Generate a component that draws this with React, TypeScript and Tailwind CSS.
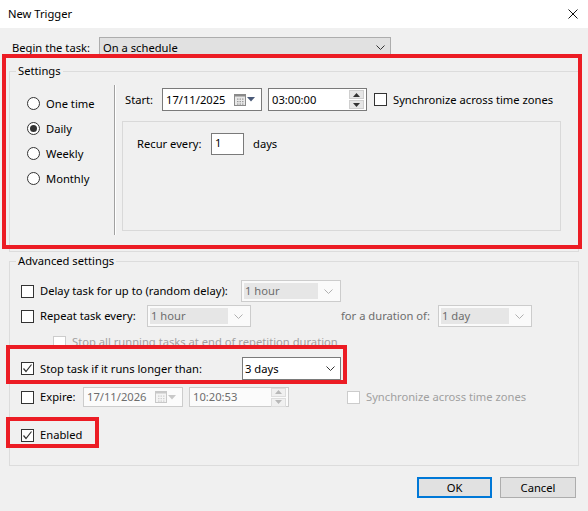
import React from 'react';

const Chevron = ({ color = '#606060' }: { color?: string }) => (
  <svg width="9" height="5" viewBox="0 0 9 5" className="shrink-0">
    <polyline points="0.5,0.5 4.5,4.5 8.5,0.5" fill="none" stroke={color} strokeWidth="1" />
  </svg>
);

const Check = () => (
  <svg width="11" height="11" viewBox="0 0 11 11">
    <polyline points="1.5,5.5 4,8.5 9.5,1.5" fill="none" stroke="#333" strokeWidth="1.2" />
  </svg>
);

const Checkbox = ({ checked = false, disabled = false }: { checked?: boolean; disabled?: boolean }) => (
  <div
    className={`flex h-[13px] w-[13px] shrink-0 items-center justify-center border bg-white ${
      disabled ? 'border-[#cccccc]' : 'border-[#333333]'
    }`}
  >
    {checked && <Check />}
  </div>
);

const Radio = ({ checked = false, label }: { checked?: boolean; label: string }) => (
  <div className="flex h-[25px] items-center gap-[6px]">
    <div className="flex h-[13px] w-[13px] items-center justify-center rounded-full border border-[#333333] bg-white">
      {checked && <div className="h-[7px] w-[7px] rounded-full bg-[#333333]" />}
    </div>
    <span>{label}</span>
  </div>
);

const Combo = ({ value, width, disabled = false }: { value: string; width: string; disabled?: boolean }) =>
  disabled ? (
    <div className={`flex h-[22px] ${width} shrink-0 items-center border border-[#cccccc] bg-[#fafafa] p-[2px]`}>
      <div className="flex h-full flex-1 items-center bg-[#e6e6e6] pl-[1px] text-[#6d6d6d]">{value}</div>
      <div className="flex w-[20px] items-center justify-center">
        <Chevron color="#b0b0b0" />
      </div>
    </div>
  ) : (
    <div className={`flex h-[23px] ${width} shrink-0 items-center border border-[#7a7a7a] bg-white pl-[2px]`}>
      <span className="flex-1">{value}</span>
      <div className="flex w-[20px] items-center justify-center">
        <Chevron color="#333" />
      </div>
    </div>
  );

const CalendarIcon = ({ disabled = false }: { disabled?: boolean }) => (
  <div className="flex items-center gap-[1px]">
    <svg width="12" height="12" viewBox="0 0 12 12">
      <rect x="0.5" y="0.5" width="11" height="11" fill={disabled ? '#f4f4f4' : '#e8e8e8'} stroke={disabled ? '#c8c8c8' : '#8a8a8a'} />
      <rect x="0.5" y="0.5" width="11" height="2" fill={disabled ? '#c8c8c8' : '#8a8a8a'} />
      {[3, 5.5, 8].map((x) =>
        [4.5, 7, 9.5].map((y) => (
          <rect key={`${x}-${y}`} x={x} y={y} width="1.5" height="1.2" fill={disabled ? '#cfcfcf' : '#9a9a9a'} />
        ))
      )}
    </svg>
    <svg width="8" height="5" viewBox="0 0 8 5">
      <polygon points="0,0 8,0 4,4.5" fill={disabled ? '#c8c8c8' : '#4a5a78'} />
    </svg>
  </div>
);

const DateBox = ({ value, disabled = false, h }: { value: string; disabled?: boolean; h: string }) => (
  <div
    className={`flex ${h} w-[100px] shrink-0 items-center border pl-[3px] pr-[6px] ${
      disabled ? 'border-[#cccccc] bg-[#fbfbfb] text-[#6d6d6d]' : 'border-[#7a7a7a] bg-white'
    }`}
  >
    <span className="flex-1">{value}</span>
    <CalendarIcon disabled={disabled} />
  </div>
);

const Spinner = ({ disabled = false }: { disabled?: boolean }) => (
  <div className="flex flex-col gap-[1px] pr-[2px]">
    {['up', 'down'].map((d) => (
      <div
        key={d}
        className={`flex h-[9px] w-[15px] items-center justify-center border ${
          disabled ? 'border-[#dddddd] bg-[#f0f0f0]' : 'border-[#cfcfcf] bg-[#e6e6e6]'
        }`}
      >
        <svg width="7" height="4" viewBox="0 0 7 4">
          <polygon
            points={d === 'up' ? '0,4 7,4 3.5,0' : '0,0 7,0 3.5,4'}
            fill={disabled ? '#b8b8b8' : '#333'}
          />
        </svg>
      </div>
    ))}
  </div>
);

const TimeBox = ({ value, disabled = false, w, h }: { value: string; disabled?: boolean; w: string; h: string }) => (
  <div
    className={`flex ${h} ${w} shrink-0 items-center border pl-[3px] ${
      disabled ? 'border-[#cccccc] bg-[#fbfbfb] text-[#6d6d6d]' : 'border-[#7a7a7a] bg-white'
    }`}
  >
    <span className="flex-1">{value}</span>
    <Spinner disabled={disabled} />
  </div>
);

const App: React.FC = () => {
  return (
    <div
      className="relative h-[511px] w-[588px] overflow-hidden whitespace-nowrap bg-[#f0f0f0] text-[11.2px] leading-[16px] text-black"
      style={{ fontFamily: '"Noto Sans", "Segoe UI", sans-serif' }}
    >
      {/* title bar */}
      <div className="flex h-[28px] items-center justify-between bg-white pl-[8px] pr-[10px]">
        <span>New Trigger</span>
        <svg width="10" height="10" viewBox="0 0 10 10">
          <path d="M0.5 0.5 L9.5 9.5 M9.5 0.5 L0.5 9.5" stroke="#111" strokeWidth="1" />
        </svg>
      </div>

      <div className="px-[9px]">
        <div className="mt-[9px] flex h-[21px] items-center">
          <span className="w-[90px] pl-[3px]">Begin the task:</span>
          <div className="flex h-[21px] w-[292px] items-center border border-[#adadad] bg-[#e1e1e1] pl-[3px]">
            <span className="flex-1">On a schedule</span>
            <div className="flex w-[20px] items-center justify-center">
              <Chevron color="#333" />
            </div>
          </div>
        </div>

        {/* Settings */}
        <fieldset className="mt-[5px] h-[189px] w-[570px] border border-[#dcdcdc]">
          <legend className="ml-[6px] px-[2px]">Settings</legend>
          <div className="mt-[6px] flex">
            <div className="flex w-[104px] flex-col pl-[17px] pt-[6px]">
              <Radio label="One time" />
              <Radio checked label="Daily" />
              <Radio label="Weekly" />
              <Radio label="Monthly" />
            </div>
            <div className="h-[150px] w-[2px] border-l border-r border-l-[#a0a0a0] border-r-white" />
            <div className="flex flex-col pl-[6px] pt-[3px]">
              <div className="flex h-[23px] items-center">
                <span className="w-[40px] shrink-0 pl-[3px]">Start:</span>
                <DateBox value="17/11/2025" h="h-[23px]" />
                <div className="w-[6px]" />
                <TimeBox value="03:00:00" w="w-[99px]" h="h-[23px]" />
                <div className="ml-[7px] flex items-center gap-[6px]">
                  <Checkbox />
                  <span>Synchronize across time zones</span>
                </div>
              </div>
              <div className="mt-[10px] h-[110px] w-[439px] border border-[#d9d9d9] pl-[14px] pt-[11px]">
                <div className="flex h-[22px] items-center">
                  <span className="w-[74px]">Recur every:</span>
                  <div className="flex h-[22px] w-[33px] items-start border border-[#7a7a7a] bg-white pl-[3px] pt-[1px]">
                    1
                  </div>
                  <span className="ml-[9px]">days</span>
                </div>
              </div>
            </div>
          </div>
        </fieldset>

        {/* Advanced settings */}
        <fieldset className="mt-[1px] h-[213px] w-[570px] border border-[#dcdcdc]">
          <legend className="ml-[6px] px-[2px]">Advanced settings</legend>
          <div className="flex flex-col pl-[11px]">
            <div className="mt-[11px] flex h-[22px] items-center">
              <Checkbox />
              <span className="ml-[6px] w-[201px] shrink-0">Delay task for up to (random delay):</span>
              <Combo value="1 hour" width="w-[100px]" disabled />
            </div>
            <div className="mt-[3px] flex h-[22px] items-center">
              <Checkbox />
              <span className="ml-[6px] w-[107px] shrink-0">Repeat task every:</span>
              <Combo value="1 hour" width="w-[104px]" disabled />
              <span className="ml-[90px] w-[97px] shrink-0 text-[#6d6d6d]">for a duration of:</span>
              <Combo value="1 day" width="w-[94px]" disabled />
            </div>
            <div className="mt-[8px] flex h-[14px] items-center pl-[32px]">
              <Checkbox disabled />
              <span className="ml-[6px] text-[#a0a0a0]">Stop all running tasks at end of repetition duration</span>
            </div>
            <div className="mt-[8px] flex h-[23px] items-center">
              <Checkbox checked />
              <span className="ml-[6px] w-[202px] shrink-0">Stop task if it runs longer than:</span>
              <Combo value="3 days" width="w-[99px]" />
            </div>
            <div className="mt-[7px] flex h-[20px] items-center">
              <Checkbox />
              <span className="ml-[6px] w-[43px] shrink-0">Expire:</span>
              <DateBox value="17/11/2026" h="h-[20px]" disabled />
              <div className="w-[6px]" />
              <TimeBox value="10:20:53" w="w-[100px]" h="h-[20px]" disabled />
              <div className="ml-[58px] flex items-center gap-[6px]">
                <Checkbox disabled />
                <span className="text-[#a0a0a0]">Synchronize across time zones</span>
              </div>
            </div>
            <div className="mt-[20px] flex h-[16px] items-center">
              <Checkbox checked />
              <span className="ml-[6px]">Enabled</span>
            </div>
          </div>
        </fieldset>

        <div className="mt-[11px] flex justify-end gap-[8px] pr-[3px]">
          <button className="h-[21px] w-[75px] border-2 border-[#0078d7] bg-[#e1e1e1]">OK</button>
          <button className="h-[21px] w-[76px] border border-[#adadad] bg-[#e1e1e1]">Cancel</button>
        </div>
      </div>

      {/* annotation boxes */}
      <div className="absolute left-[2px] top-[54px] h-[195px] w-[580px] border-4 border-[#ec1c24]" />
      <div className="absolute left-[6px] top-[345px] h-[39px] w-[341px] border-4 border-[#ec1c24]" />
      <div className="absolute left-[6px] top-[417px] h-[31px] w-[93px] border-4 border-[#ec1c24]" />
    </div>
  );
};

export default App;
